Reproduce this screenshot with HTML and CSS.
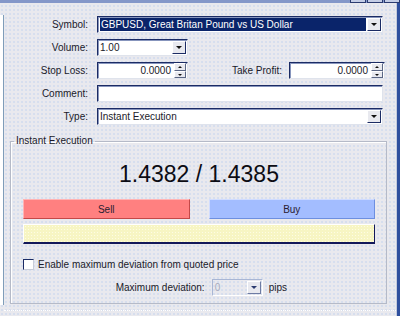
FILE: index.html
```html
<!DOCTYPE html>
<html lang="en">
<head>
  <meta charset="UTF-8">
  <title>Order</title>
  <link rel="stylesheet" href="styles.css">
</head>
<body>
  <div class="window">
    <div class="titlebar">
      <span class="tb-btn"></span><span class="tb-btn"></span><span class="tb-btn"></span>
    </div>
    <div class="main">
      <div class="sidebar"></div>
      <div class="dialog">
        <div class="row">
          <label class="label">Symbol:</label>
          <div class="field wide select">
            <span class="value selected">GBPUSD, Great Britan Pound vs US Dollar</span>
            <span class="drop"></span>
          </div>
        </div>
        <div class="row">
          <label class="label">Volume:</label>
          <div class="field short select">
            <span class="value">1.00</span>
            <span class="drop"></span>
          </div>
        </div>
        <div class="row">
          <label class="label">Stop Loss:</label>
          <div class="field short spin">
            <span class="value num">0.0000</span>
            <span class="spinner"><i class="up"></i><i class="down"></i></span>
          </div>
          <label class="label tp">Take Profit:</label>
          <div class="field tp-field spin">
            <span class="value num">0.0000</span>
            <span class="spinner"><i class="up"></i><i class="down"></i></span>
          </div>
        </div>
        <div class="row">
          <label class="label">Comment:</label>
          <div class="field wide"></div>
        </div>
        <div class="row">
          <label class="label">Type:</label>
          <div class="field wide select">
            <span class="value">Instant Execution</span>
            <span class="drop"></span>
          </div>
        </div>

        <fieldset class="group">
          <legend>Instant Execution</legend>
          <div class="price">1.4382 / 1.4385</div>
          <div class="actions">
            <button class="btn sell">Sell</button>
            <button class="btn buy">Buy</button>
          </div>
          <div class="status"></div>
          <div class="check-row">
            <span class="checkbox"></span>
            <span>Enable maximum deviation from quoted price</span>
          </div>
          <div class="dev-row">
            <span>Maximum deviation:</span>
            <div class="field dev select disabled">
              <span class="value">0</span>
              <span class="drop"></span>
            </div>
            <span>pips</span>
          </div>
        </fieldset>
        <div class="footer"></div>
      </div>
      <div class="edge"></div>
    </div>
  </div>
</body>
</html>
```

FILE: styles.css
```css
body {
  margin: 0;
  font-family: 'Liberation Sans', Arial, sans-serif;
  font-size: 10px;
  color: #1a1a2a;
}
.window {
  width: 400px;
  height: 316px;
  overflow: hidden;
  background: #e9e9ee radial-gradient(#d6deee 0.7px, transparent 0.8px) 0 0 / 4px 4px;
}
.titlebar {
  height: 3px;
  background: #8497c9;
  display: flex;
  justify-content: flex-end;
}
.tb-btn {
  width: 14px;
  height: 2px;
  margin-left: 1px;
  background: #c4cde6;
  border: 1px solid #2b3b70;
  border-top: none;
}
.main {
  display: flex;
  height: 313px;
}
.sidebar {
  width: 3px;
  height: 290px;
  margin-top: 12px;
  background: #fff;
  border-right: 1px solid #7f9db9;
}
.dialog {
  flex: 1;
  padding-top: 13px;
}
.edge {
  width: 3px;
  background: #2e4f9e;
  border-left: 1px solid #c3cbdd;
}

.row {
  display: flex;
  align-items: center;
  height: 17px;
  margin-bottom: 6px;
}
.label {
  width: 84px;
  margin-right: 9px;
  text-align: right;
}
.label.tp {
  width: auto;
  flex: 1;
  margin-right: 7px;
}
.field {
  height: 17px;
  box-sizing: border-box;
  background: #fff;
  border: 1px solid;
  border-color: #1b2b64 #dfe3ec #dfe3ec #1b2b64;
  box-shadow: inset 1px 1px 0 #8795bd;
  display: flex;
  align-items: center;
}
.wide { width: 286px; }
.short { width: 91px; }
.tp-field { width: 96px; margin-right: 11px; }
.value {
  flex: 1;
  padding: 0 2px;
  white-space: nowrap;
  overflow: hidden;
  line-height: 13px;
}
.value.selected {
  background: #0a246a;
  color: #fff;
  margin: 0 1px 0 2px;
  padding: 0 1px;
}
.value.num {
  text-align: right;
  padding-right: 3px;
}
.drop {
  width: 14px;
  height: 13px;
  margin-right: 1px;
  box-sizing: border-box;
  background: #e8e9ef;
  border: 1px solid;
  border-color: #fff #1b2b64 #1b2b64 #fff;
  position: relative;
}
.drop::after {
  content: "";
  position: absolute;
  left: 3px;
  top: 4px;
  border-left: 3px solid transparent;
  border-right: 3px solid transparent;
  border-top: 3px solid #111;
}
.spinner {
  width: 12px;
  height: 15px;
  display: flex;
  flex-direction: column;
  margin-right: 1px;
}
.spinner i {
  flex: 1;
  background: #e8e9ef;
  border: 1px solid;
  border-color: #fff #5a6684 #5a6684 #fff;
  position: relative;
}
.spinner i::after {
  content: "";
  position: absolute;
  left: 3px;
  border-left: 2px solid transparent;
  border-right: 2px solid transparent;
}
.spinner .up::after { top: 2px; border-bottom: 2px solid #111; }
.spinner .down::after { top: 2px; border-top: 2px solid #111; }

.group {
  margin: 10px 9px 0 6px;
  padding: 13px 11px 7px 12px;
  border: 1px solid #b5bac8;
  box-shadow: inset 1px 1px 0 #fff;
}
.group legend {
  margin-left: -9px;
  padding: 0 2px;
  line-height: 12px;
}
.price {
  font-size: 23px;
  line-height: 28px;
  text-align: center;
  color: #0c0c14;
}
.actions {
  display: flex;
  gap: 19px;
  margin-top: 11px;
}
.btn {
  flex: 1;
  height: 20px;
  font: inherit;
  color: #2a2030;
  border: 1px solid;
  padding: 0;
}
.sell {
  background: #ff8080;
  border-color: #ffb4b4 #c44848 #c44848 #ffb4b4;
}
.buy {
  background: #a3bdff;
  border-color: #d0dcff #6d8fe0 #6d8fe0 #d0dcff;
}
.status {
  height: 20px;
  margin-top: 5px;
  box-sizing: border-box;
  background: #f7f5c3 radial-gradient(#fdfce4 0.6px, transparent 0.7px) 0 0 / 3px 3px;
  border: 1px solid;
  border-color: #fff #12185a #12185a #fff;
  border-bottom-width: 2px;
}
.check-row {
  display: flex;
  align-items: center;
  gap: 4px;
  height: 12px;
  margin-top: 14px;
}
.checkbox {
  width: 11px;
  height: 11px;
  box-sizing: border-box;
  background: #fff;
  border: 1px solid;
  border-color: #1b2b64 #c8ccd8 #c8ccd8 #1b2b64;
}
.dev-row {
  display: flex;
  align-items: center;
  justify-content: flex-end;
  gap: 6px;
  height: 17px;
  margin-top: 9px;
  padding-right: 88px;
}
.field.dev {
  width: 51px;
  background: transparent;
  border: 1px solid #a9b6d4;
  border-bottom-color: #fff;
  border-right-color: #fff;
  box-shadow: none;
  margin-left: 1px;
}
.disabled .value { color: #a7abbd; }
.disabled .drop {
  border-color: #fff #6e7ca4 #6e7ca4 #fff;
}
.disabled .drop::after { border-top-color: #2c3c70; }
.footer {
  margin-top: 6px;
  border-top: 1px dotted #fff;
}
```
